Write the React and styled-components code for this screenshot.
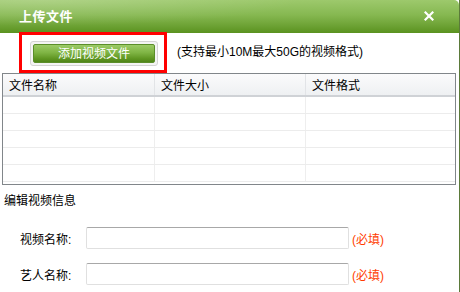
import React from "react";
import styled, { createGlobalStyle } from "styled-components";

const Global = createGlobalStyle`
  html, body { margin: 0; padding: 0; background: #fff; }
  body { font-family: "Liberation Sans", "Noto Sans CJK SC", sans-serif; font-size: 12px; color: #000; }
`;

const Window = styled.div`
  width: 459px;
  height: 292px;
  border-right: 1px solid #5b7a3a;
  background: #fff;
  overflow: hidden;
  position: relative;
`;

const TitleBar = styled.div`
  height: 33px;
  display: flex;
  align-items: center;
  justify-content: space-between;
  padding: 0 25px 2px 19px;
  box-sizing: border-box;
  border-top-right-radius: 5px;
  background:
    radial-gradient(ellipse 260px 26px at 40px 0px, rgba(255,255,255,0.18), rgba(255,255,255,0) 100%),
    linear-gradient(to bottom, #9dc96c 0%, #86b851 45%, #6fa437 75%, #5a921f 100%);
`;

const Title = styled.div`
  color: #fff;
  font-weight: bold;
  font-size: 13px;
  letter-spacing: 0.5px;
`;

const Close = styled.div`
  width: 10px;
  height: 10px;
  display: flex;
  align-items: center;
  justify-content: center;
`;

const Toolbar = styled.div`
  height: 40px;
  display: flex;
  align-items: flex-start;
  padding-left: 19px;
`;

const Highlight = styled.div`
  margin-top: -1px;
  width: 148px;
  height: 41px;
  box-sizing: border-box;
  border: 3px solid #ff0000;
  padding: 6px 0 0 8px;
  position: relative;
  z-index: 2;
`;

const GreenButton = styled.button`
  width: 128px;
  height: 25px;
  box-sizing: border-box;
  padding: 2px;
  border: 1px solid #d4d4d4;
  border-radius: 3px;
  background: #f4f4f4;
  cursor: pointer;
  display: block;
  & > span {
    display: flex;
    align-items: center;
    justify-content: center;
    height: 100%;
    border-radius: 2px;
    border: 1px solid #5b8e2a;
    box-sizing: border-box;
    background: linear-gradient(to bottom, #9ccb67 0%, #7fb444 45%, #5f9622 80%, #4f8518 100%);
    color: #fff;
    font-family: "Liberation Sans", "Noto Sans CJK SC", sans-serif;
    font-size: 12px;
    line-height: 1;
  }
`;

const Hint = styled.div`
  margin: 11px 0 0 10px;
  font-size: 12px;
  line-height: 16px;
`;

const Table = styled.div`
  margin-left: 2px;
  width: 454px;
  height: 112px;
  box-sizing: border-box;
  border: 1px solid #81868a;
`;

const Row = styled.div`
  display: grid;
  grid-template-columns: 152px 151px 1fr;
  height: ${(p) => (p.$header ? "21px" : "16px")};
  border-bottom: ${(p) => (p.$header ? "2px solid #cfd2d6" : "1px solid #ececec")};
  background: ${(p) => (p.$header ? "linear-gradient(to bottom, #fbfbfc, #eef0f2)" : "#fff")};
`;

const Cell = styled.div`
  border-right: ${(p) => (p.$last ? "none" : p.$header ? "1px solid #e2e4e7" : "1px solid #eeeeee")};
  padding-left: 6px;
  display: flex;
  align-items: center;
  font-size: 12px;
`;

const SectionTitle = styled.div`
  margin: 8px 0 0 4px;
  font-size: 12px;
  line-height: 16px;
`;

const Form = styled.div`
  margin-top: 18px;
  display: flex;
  flex-direction: column;
  gap: 14px;
`;

const FormRow = styled.div`
  display: flex;
  align-items: center;
  height: 22px;
`;

const Label = styled.label`
  width: 66px;
  padding-left: 20px;
  font-size: 12px;
`;

const Input = styled.input`
  width: 263px;
  height: 22px;
  box-sizing: border-box;
  border: 1px solid #e0e0e0;
  border-top-color: #a8a8a8;
  border-radius: 2px;
  outline: none;
  margin: 0;
`;

const Required = styled.span`
  margin-left: 3px;
  color: #ff3c00;
  font-size: 12px;
`;

const headers = ["文件名称", "文件大小", "文件格式"];

export default function App() {
  return (
    <>
      <Global />
      <Window>
        <TitleBar>
          <Title>上传文件</Title>
          <Close>
            <svg width="10" height="10" viewBox="0 0 10 10">
              <path d="M1.5 1.5 L8.5 8.5 M8.5 1.5 L1.5 8.5" stroke="#fff" strokeWidth="2.2" strokeLinecap="square" />
            </svg>
          </Close>
        </TitleBar>
        <Toolbar>
          <Highlight>
            <GreenButton>
              <span>添加视频文件</span>
            </GreenButton>
          </Highlight>
          <Hint>(支持最小10M最大50G的视频格式)</Hint>
        </Toolbar>
        <Table>
          <Row $header>
            {headers.map((h, i) => (
              <Cell key={h} $header $last={i === 2}>{h}</Cell>
            ))}
          </Row>
          {[0, 1, 2, 3, 4].map((r) => (
            <Row key={r}>
              <Cell />
              <Cell />
              <Cell $last />
            </Row>
          ))}
        </Table>
        <SectionTitle>编辑视频信息</SectionTitle>
        <Form>
          <FormRow>
            <Label>视频名称:</Label>
            <Input />
            <Required>(必填)</Required>
          </FormRow>
          <FormRow>
            <Label>艺人名称:</Label>
            <Input />
            <Required>(必填)</Required>
          </FormRow>
        </Form>
      </Window>
    </>
  );
}
